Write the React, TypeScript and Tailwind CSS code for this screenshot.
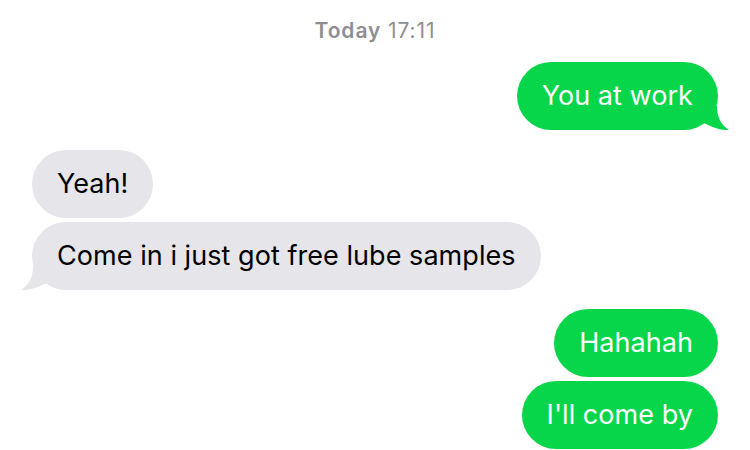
const font = { fontFamily: "Inter, 'Noto Sans', sans-serif" };

type Msg = { text: string; mine: boolean; tail?: boolean; gapTop: string };

const messages: Msg[] = [
  { text: "You at work", mine: true, tail: true, gapTop: "mt-[18px]" },
  { text: "Yeah!", mine: false, gapTop: "mt-[20px]" },
  { text: "Come in i just got free lube samples", mine: false, tail: true, gapTop: "mt-[4px]" },
  { text: "Hahahah", mine: true, gapTop: "mt-[19px]" },
  { text: "I'll come by", mine: true, gapTop: "mt-[4px]" },
];

function Tail({ mine }: { mine: boolean }) {
  if (mine) {
    return (
      <svg className="absolute bottom-0 right-[-12px] h-[24px] w-[26px]" viewBox="0 0 26 24">
        <path
          d="M0 0 H13 C13 10 16 18 25 24 C18 24.5 10 22 4 19 C2.5 18 1 17.5 0 17.5 Z"
          fill="#07d64b"
        />
      </svg>
    );
  }
  return (
    <svg className="absolute bottom-0 left-[-12px] h-[24px] w-[26px]" viewBox="0 0 26 24">
      <path
        d="M26 0 H13 C13 10 10 18 1 24 C8 24.5 16 22 22 19 C23.5 18 25 17.5 26 17.5 Z"
        fill="#e5e5ea"
      />
    </svg>
  );
}

function Bubble({ msg }: { msg: Msg }) {
  return (
    <div className={`flex ${msg.mine ? "justify-end" : "justify-start"} ${msg.gapTop}`}>
      <div
        className={`relative flex h-[68px] items-center rounded-[34px] px-[25px] text-[27px] tracking-[0.05px] ${
          msg.mine ? "bg-[#07d64b] text-white" : "bg-[#e5e5ea] text-black"
        }`}
      >
        {msg.text}
        {msg.tail && <Tail mine={msg.mine} />}
      </div>
    </div>
  );
}

export default function App() {
  return (
    <div className="h-[450px] w-[750px] overflow-hidden bg-white px-[32px]" style={font}>
      <div className="pt-[18px] text-center text-[21px] leading-[26px] tracking-[0.9px] text-[#8e8e93]">
        <span className="font-semibold">Today</span> 17:11
      </div>
      {messages.map((msg, i) => (
        <Bubble key={i} msg={msg} />
      ))}
    </div>
  );
}
